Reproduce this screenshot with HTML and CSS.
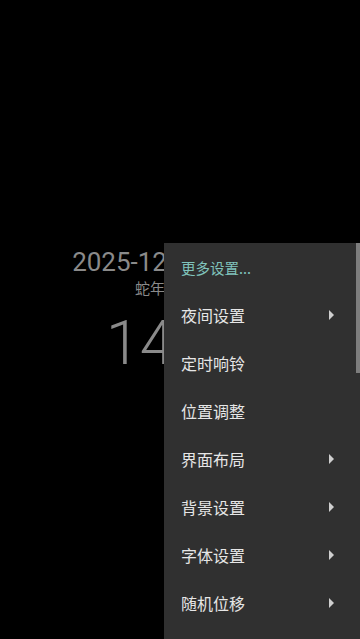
FILE: index.html
```html
<!DOCTYPE html>
<html lang="zh-CN">
<head>
  <meta charset="UTF-8">
  <meta name="viewport" content="width=device-width, initial-scale=1.0">
  <title>时钟</title>
  <link rel="stylesheet" href="styles.css">
</head>
<body>
  <div class="clock">
    <div class="date">2025-12-16 星期二</div>
    <div class="lunar">蛇年十月廿七</div>
    <div class="time">14:32</div>
  </div>

  <!-- 弹出菜单 -->
  <div class="menu">
    <div class="menu-item more">更多设置...</div>
    <div class="menu-item">夜间设置<span class="arrow"></span></div>
    <div class="menu-item">定时响铃</div>
    <div class="menu-item">位置调整</div>
    <div class="menu-item">界面布局<span class="arrow"></span></div>
    <div class="menu-item">背景设置<span class="arrow"></span></div>
    <div class="menu-item">字体设置<span class="arrow"></span></div>
    <div class="menu-item">随机位移<span class="arrow"></span></div>
    <div class="scrollbar"></div>
  </div>
</body>
</html>
```

FILE: styles.css
```css
html, body {
  height: 100%;
}

body {
  margin: 0;
  padding: 0;
  background-color: #000;
  font-family: Roboto, "Noto Sans CJK SC", sans-serif;
  overflow: hidden;
}

/* 时钟 */
.clock {
  padding-top: 245px;
  text-align: center;
  color: #8a8a8a;
}

.date {
  font-size: 26px;
  line-height: 34px;
  white-space: nowrap;
}

.lunar {
  font-size: 15px;
  line-height: 20px;
  margin-top: 0;
}

.time {
  font-size: 61px;
  font-weight: 300;
  line-height: 70px;
  margin-top: 9px;
  white-space: nowrap;
}

/* 菜单 */
.menu {
  position: absolute;
  left: 164px;
  top: 243px;
  right: 0;
  bottom: 0;
  background-color: #303030;
  overflow: hidden;
}

.menu-item {
  display: flex;
  align-items: center;
  justify-content: space-between;
  height: 48px;
  padding: 0 26px 0 17px;
  font-family: "Noto Sans CJK SC", sans-serif;
  font-size: 16px;
  color: #e6e6e6;
}

.menu-item.more {
  font-size: 14.5px;
  color: #80c4bc;
}

.arrow {
  width: 0;
  height: 0;
  border-left: 5px solid #cfcfcf;
  border-top: 5px solid transparent;
  border-bottom: 5px solid transparent;
}

.scrollbar {
  position: absolute;
  top: 0;
  right: 0;
  width: 4px;
  height: 130px;
  background-color: #7d7d7d;
}
```
